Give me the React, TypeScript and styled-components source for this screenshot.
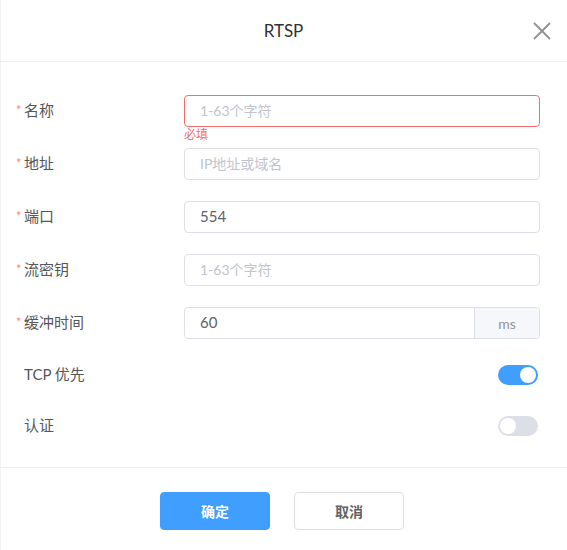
import styled, { createGlobalStyle } from 'styled-components';

const GlobalStyle = createGlobalStyle`
  html, body {
    margin: 0;
    padding: 0;
    background: #ffffff;
  }
  body {
    font-family: Lato, 'Noto Sans CJK SC', sans-serif;
  }
`;

type Field = {
  label: string;
  required?: boolean;
  value?: string;
  placeholder?: string;
  error?: string;
  unit?: string;
};

const fields: Field[] = [
  { label: '名称', required: true, placeholder: '1-63个字符', error: '必填' },
  { label: '地址', required: true, placeholder: 'IP地址或域名' },
  { label: '端口', required: true, value: '554' },
  { label: '流密钥', required: true, placeholder: '1-63个字符' },
  { label: '缓冲时间', required: true, value: '60', unit: 'ms' },
];

function CloseIcon() {
  return (
    <svg width="18" height="18" viewBox="0 0 18 18">
      <path d="M1 1 L17 17 M17 1 L1 17" stroke="#8e9097" strokeWidth="1.8" fill="none" />
    </svg>
  );
}

function App() {
  return (
    <>
      <GlobalStyle />
      <Dialog>
        <Header>
          <Title>RTSP</Title>
          <CloseButton>
            <CloseIcon />
          </CloseButton>
        </Header>

        <Body>
          {fields.map((f) => (
            <Row key={f.label}>
              <Label $required={f.required}>{f.label}</Label>
              <Control>
                <InputGroup $error={!!f.error}>
                  <Input defaultValue={f.value} placeholder={f.placeholder} readOnly />
                  {f.unit && <Unit>{f.unit}</Unit>}
                </InputGroup>
                {f.error && <ErrorText>{f.error}</ErrorText>}
              </Control>
            </Row>
          ))}

          <Row $compact>
            <Label>TCP 优先</Label>
            <Control>
              <Switch $on />
            </Control>
          </Row>

          <Row $compact>
            <Label>认证</Label>
            <Control>
              <Switch />
            </Control>
          </Row>
        </Body>

        <Footer>
          <Button $primary>确定</Button>
          <Button>取消</Button>
        </Footer>
      </Dialog>
    </>
  );
}

export default App;

const Dialog = styled.div`
  width: 567px;
  height: 550px;
  background: #ffffff;
  box-shadow: inset 1px 0 0 #f2f2f2;
  box-sizing: border-box;
`;

const Header = styled.div`
  position: relative;
  height: 62px;
  border-bottom: 1px solid #ebeef5;
  display: flex;
  align-items: center;
  justify-content: center;
  box-sizing: border-box;
`;

const Title = styled.span`
  font-size: 17px;
  color: #303133;
`;

const CloseButton = styled.div`
  position: absolute;
  right: 16px;
  top: 22px;
  width: 18px;
  height: 18px;
  display: flex;
`;

const Body = styled.div`
  padding: 33px 27px 26px 16px;
  display: flex;
  flex-direction: column;
  gap: 21px;
`;

const Row = styled.div<{ $compact?: boolean }>`
  display: flex;
  align-items: center;
  height: ${({ $compact }) => ($compact ? '30px' : '32px')};
`;

const Label = styled.div<{ $required?: boolean }>`
  width: 168px;
  padding-left: 8px;
  padding-bottom: 3px;
  box-sizing: border-box;
  position: relative;
  font-size: 15px;
  color: #555659;

  &::before {
    content: ${({ $required }) => ($required ? "'*'" : 'none')};
    position: absolute;
    left: 0;
    top: 5px;
    line-height: 1;
    color: #f78989;
    font-size: 13px;
  }
`;

const Control = styled.div`
  position: relative;
  flex: 1;
  display: flex;
  justify-content: flex-end;
`;

const InputGroup = styled.div<{ $error?: boolean }>`
  flex: 1;
  display: flex;
  height: 32px;
  border: 1px solid ${({ $error }) => ($error ? '#f56c6c' : '#dcdfe6')};
  border-radius: 4px;
  overflow: hidden;
  box-sizing: border-box;
`;

const Input = styled.input`
  flex: 1;
  min-width: 0;
  border: none;
  outline: none;
  padding: 0 15px 2px;
  font-family: Lato, 'Noto Sans CJK SC', sans-serif;
  font-size: 15px;
  color: #606266;
  background: transparent;

  &::placeholder {
    color: #c0c4cc;
    font-size: 14px;
  }
`;

const Unit = styled.div`
  width: 64px;
  display: flex;
  align-items: center;
  justify-content: center;
  background: #f5f7fa;
  border-left: 1px solid #dcdfe6;
  font-size: 14px;
  color: #909399;
`;

const ErrorText = styled.div`
  position: absolute;
  left: 0;
  top: 33px;
  font-size: 12px;
  line-height: 14px;
  color: #f56c6c;
`;

const Switch = styled.div<{ $on?: boolean }>`
  position: relative;
  width: 40px;
  height: 20px;
  margin-right: 2px;
  border-radius: 10px;
  background: ${({ $on }) => ($on ? '#409eff' : '#dcdfe6')};

  &::after {
    content: '';
    position: absolute;
    top: 2px;
    left: ${({ $on }) => ($on ? '22px' : '2px')};
    width: 16px;
    height: 16px;
    border-radius: 50%;
    background: #ffffff;
  }
`;

const Footer = styled.div`
  border-top: 1px solid #ebeef5;
  padding: 24px 3px 0 0;
  display: flex;
  justify-content: center;
  gap: 24px;
`;

const Button = styled.button<{ $primary?: boolean }>`
  width: 110px;
  height: 38px;
  border-radius: 4px;
  border: 1px solid ${({ $primary }) => ($primary ? '#409eff' : '#dcdfe6')};
  background: ${({ $primary }) => ($primary ? '#409eff' : '#ffffff')};
  color: ${({ $primary }) => ($primary ? '#ffffff' : '#606266')};
  font-family: Lato, 'Noto Sans CJK SC', sans-serif;
  font-size: 14px;
  font-weight: 700;
  cursor: pointer;
`;
